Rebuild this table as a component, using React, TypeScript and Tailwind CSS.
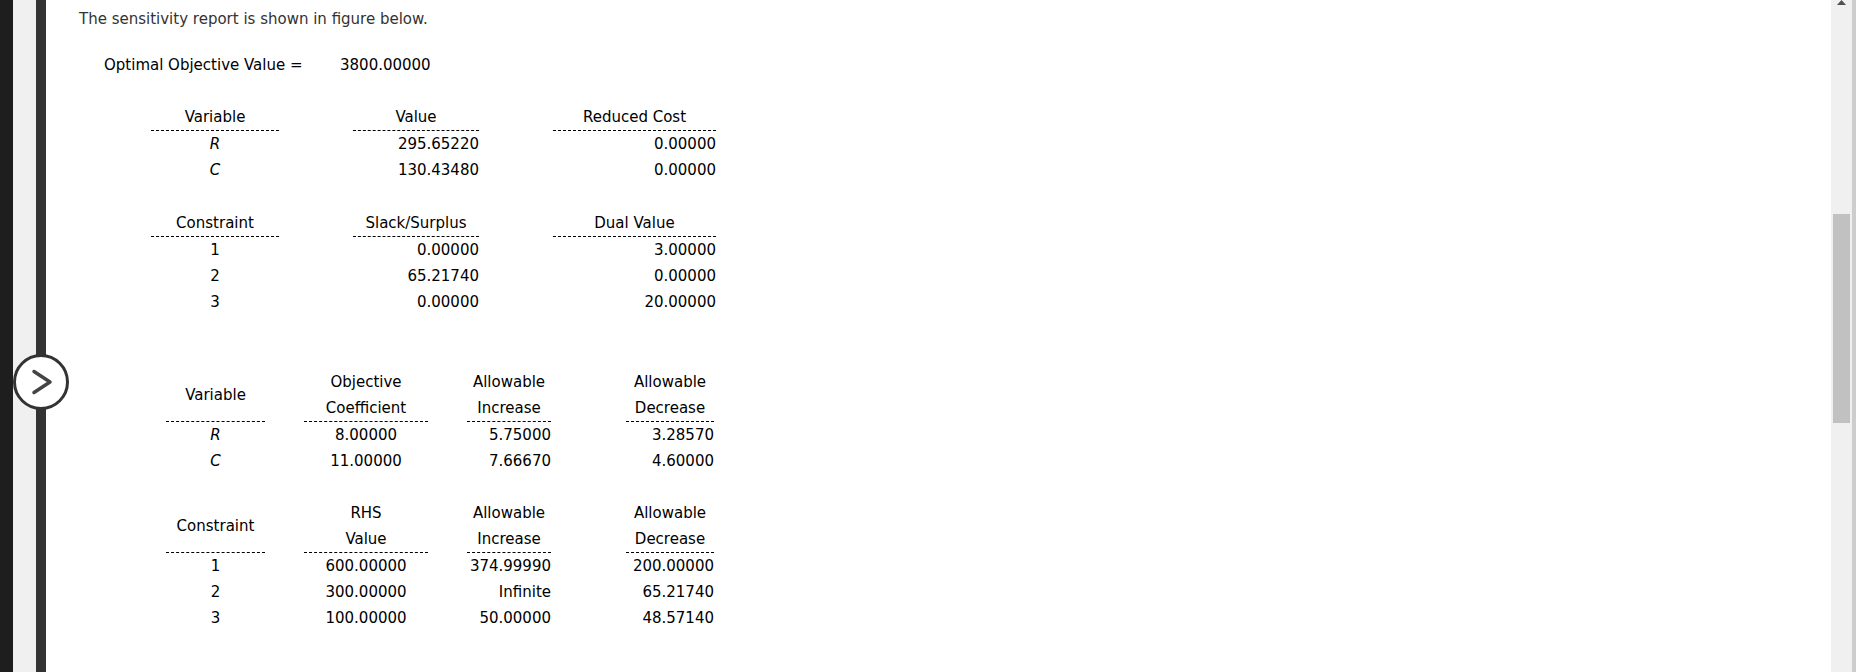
import React from 'react'

type Col = { w: number; ml: number; align: 'center' | 'right' }

const font = { fontFamily: '"DejaVu Sans", Verdana, sans-serif' }

function Report({
  cols,
  head,
  rows,
  className,
}: {
  cols: Col[]
  head: string[][]
  rows: React.ReactNode[][]
  className: string
}) {
  const lines = Math.max(...head.map((h) => h.length))
  return (
    <div className={className}>
      <div className="flex">
        {cols.map((c, i) => (
          <div
            key={i}
            style={{ width: c.w, marginLeft: c.ml }}
            className="flex flex-col justify-center text-center border-b border-dashed border-black"
          >
            <div style={{ height: lines * 26 }} className="flex flex-col justify-center">
              {head[i].map((t) => (
                <div key={t} className="leading-[26px] whitespace-nowrap">
                  {t}
                </div>
              ))}
            </div>
          </div>
        ))}
      </div>
      {rows.map((r, j) => (
        <div key={j} className="flex">
          {cols.map((c, i) => (
            <div
              key={i}
              style={{ width: c.w, marginLeft: c.ml }}
              className={
                'leading-[26px] whitespace-nowrap ' +
                (c.align === 'center' ? 'text-center' : 'text-right')
              }
            >
              {r[i]}
            </div>
          ))}
        </div>
      ))}
    </div>
  )
}

const t1: Col[] = [
  { w: 128, ml: 0, align: 'center' },
  { w: 126, ml: 74, align: 'right' },
  { w: 163, ml: 74, align: 'right' },
]

const t3: Col[] = [
  { w: 99, ml: 0, align: 'center' },
  { w: 124, ml: 39, align: 'center' },
  { w: 84, ml: 39, align: 'right' },
  { w: 88, ml: 75, align: 'right' },
]

export default function App() {
  return (
    <div className="relative flex h-[672px] w-[1856px] overflow-hidden bg-white text-[15px] text-black" style={font}>
      <div className="w-[13px] bg-[#1e1e1e]" />
      <div className="w-[23px] bg-[#f0f0f0]" />
      <div className="w-[10px] bg-[#333333]" />

      <div className="flex-1 pt-[6px]">
        <p className="ml-[33px] leading-[26px] text-[#333333]">The sensitivity report is shown in figure below.</p>

        <div className="ml-[58px] mt-[20px] flex leading-[26px]">
          <div className="w-[236px]">Optimal Objective Value =</div>
          <div>3800.00000</div>
        </div>

        <Report
          className="ml-[105px] mt-[26px]"
          cols={t1}
          head={[['Variable'], ['Value'], ['Reduced Cost']]}
          rows={[
            [<i key="r">R</i>, '295.65220', '0.00000'],
            [<i key="c">C</i>, '130.43480', '0.00000'],
          ]}
        />

        <Report
          className="ml-[105px] mt-[27px]"
          cols={t1}
          head={[['Constraint'], ['Slack/Surplus'], ['Dual Value']]}
          rows={[
            ['1', '0.00000', '3.00000'],
            ['2', '65.21740', '0.00000'],
            ['3', '0.00000', '20.00000'],
          ]}
        />

        <Report
          className="ml-[120px] mt-[54px]"
          cols={t3}
          head={[['Variable'], ['Objective', 'Coefficient'], ['Allowable', 'Increase'], ['Allowable', 'Decrease']]}
          rows={[
            [<i key="r">R</i>, '8.00000', '5.75000', '3.28570'],
            [<i key="c">C</i>, '11.00000', '7.66670', '4.60000'],
          ]}
        />

        <Report
          className="ml-[120px] mt-[26px]"
          cols={t3}
          head={[['Constraint'], ['RHS', 'Value'], ['Allowable', 'Increase'], ['Allowable', 'Decrease']]}
          rows={[
            ['1', '600.00000', '374.99990', '200.00000'],
            ['2', '300.00000', 'Infinite', '65.21740'],
            ['3', '100.00000', '50.00000', '48.57140'],
          ]}
        />
      </div>

      <div className="relative w-[21px] bg-[#f0f0f0]">
        <svg className="absolute left-[5px] top-0" width="11" height="5" viewBox="0 0 11 5">
          <polygon points="1,5 10,5 5.5,0" fill="#505050" />
        </svg>
        <div className="absolute left-[2px] top-[214px] h-[209px] w-[17px] bg-[#c1c1c1]" />
      </div>
      <div className="w-[4px] bg-[#cdcdcd]" />

      <button className="absolute left-[13px] top-[354px] h-[56px] w-[56px]">
        <svg width="56" height="56" viewBox="0 0 56 56">
          <circle cx="28" cy="28" r="26.5" fill="white" stroke="#333333" strokeWidth="3" />
          <polyline
            points="21,17.5 37,28 21,38.5"
            fill="none"
            stroke="#444444"
            strokeWidth="3.5"
            strokeLinecap="round"
            strokeLinejoin="round"
          />
        </svg>
      </button>
    </div>
  )
}
